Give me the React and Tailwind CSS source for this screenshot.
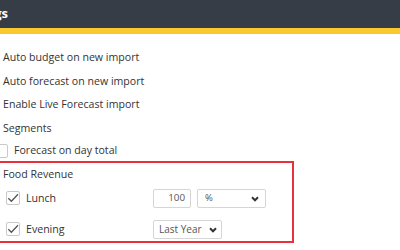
import React from "react";

const font = { fontFamily: '"Open Sans", "Liberation Sans", sans-serif' };

function Check({ checked }) {
  return (
    <div className="w-[14px] h-[14px] border border-[#c9c9c9] rounded-[2px] bg-white flex items-center justify-center shrink-0">
      {checked && (
        <svg width="12" height="12" viewBox="0 0 12 12">
          <path d="M1.3 6.3 L4.4 9.3 L11 2.3" fill="none" stroke="#555" strokeWidth="1.3" />
        </svg>
      )}
    </div>
  );
}

function Chevron() {
  return (
    <svg width="8" height="6" viewBox="0 0 8 6">
      <path d="M1 1.3 L4 4.3 L7 1.3" fill="none" stroke="#333" strokeWidth="2" />
    </svg>
  );
}

export default function App() {
  return (
    <div className="w-[400px] h-[250px] bg-white overflow-hidden text-[10.6px] text-[#333]" style={font}>
      <div className="h-[34px] bg-[#363d47] border-b-[6px] border-[#f9c92f] flex items-center">
        <div className="w-[8px] overflow-hidden flex justify-end">
          <span className="whitespace-nowrap text-white font-bold text-[13px]">Settings</span>
        </div>
      </div>
      <div className="pt-[12.25px] pl-[3px]">
        <div className="h-[23.5px] flex items-center">Auto budget on new import</div>
        <div className="h-[23.5px] flex items-center">Auto forecast on new import</div>
        <div className="h-[23.5px] flex items-center">Enable Live Forecast import</div>
        <div className="h-[23.5px] flex items-center">Segments</div>
        <div className="h-[20.5px] flex items-center gap-[6px] -ml-[9px]">
          <Check checked={false} />
          <span>Forecast on day total</span>
        </div>
        <div className="-ml-[13px] w-[304px] border-2 border-[#e8313c] pl-[11px] pb-[2px]">
          <div className="h-[24px] flex items-center">Food Revenue</div>
          <div className="mt-[2.25px] h-[19px] flex items-center">
            <div className="w-[150px] pl-[3px] flex items-center gap-[6px]">
              <Check checked />
              <span>Lunch</span>
            </div>
            <div className="w-[38px] h-[19px] border border-[#d5d5d5] rounded-[2px] flex items-center justify-end pr-[5px] text-[9.8px] text-[#555]">
              100
            </div>
            <div className="ml-[6px] w-[69px] h-[19px] border border-[#d5d5d5] rounded-[2px] flex items-center justify-between pl-[7px] pr-[6px] text-[9.5px] text-[#555]">
              <span>%</span>
              <Chevron />
            </div>
          </div>
          <div className="mt-[12px] h-[19px] flex items-center">
            <div className="w-[150px] pl-[3px] flex items-center gap-[6px]">
              <Check checked />
              <span>Evening</span>
            </div>
            <div className="w-[69px] h-[19px] border border-[#d5d5d5] rounded-[2px] flex items-center justify-between pl-[5px] pr-[4px] text-[10px] text-[#555]">
              <span>Last Year</span>
              <Chevron />
            </div>
          </div>
        </div>
      </div>
    </div>
  );
}
